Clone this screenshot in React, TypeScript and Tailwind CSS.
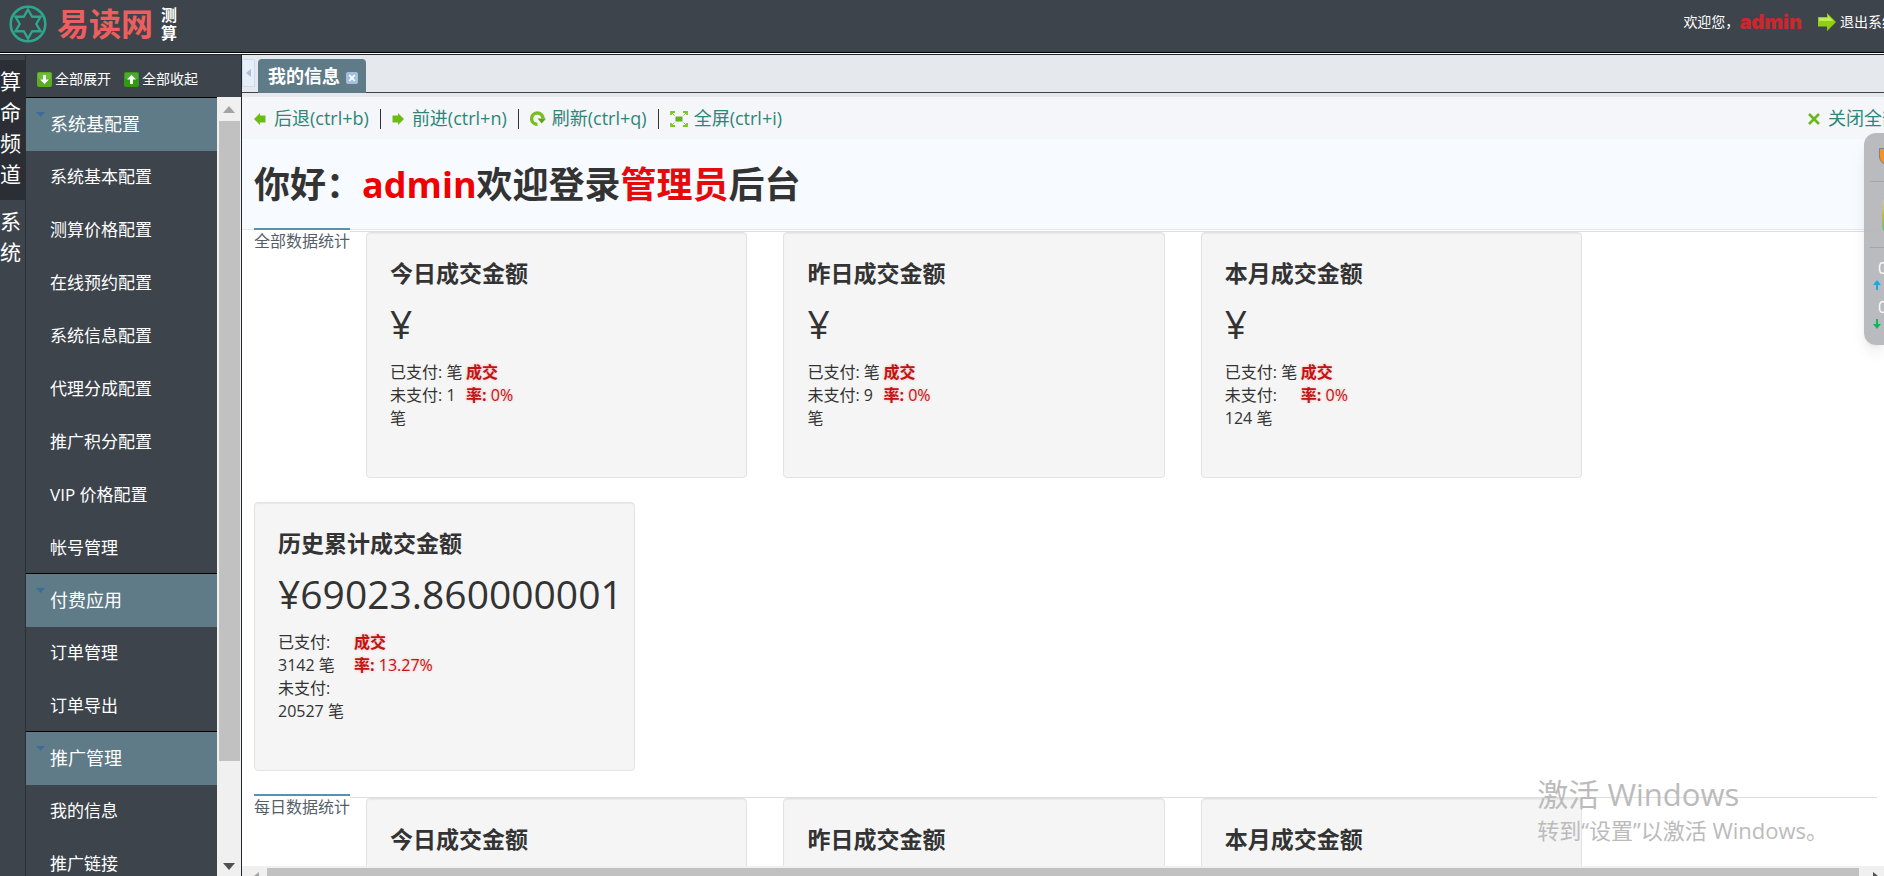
import type { ReactNode } from "react";

type MenuGroup = { title: string; items: string[] };

type Stat = {
  title: string;
  amount: string;
  paid: string;
  unpaid: string;
  rate: string;
};

const menu: MenuGroup[] = [
  {
    title: "系统基配置",
    items: [
      "系统基本配置",
      "测算价格配置",
      "在线预约配置",
      "系统信息配置",
      "代理分成配置",
      "推广积分配置",
      "VIP 价格配置",
      "帐号管理",
    ],
  },
  { title: "付费应用", items: ["订单管理", "订单导出"] },
  { title: "推广管理", items: ["我的信息", "推广链接"] },
];

const totals: Stat[] = [
  { title: "今日成交金额", amount: "", paid: "", unpaid: "1 ", rate: "0%" },
  { title: "昨日成交金额", amount: "", paid: "", unpaid: "9 ", rate: "0%" },
  { title: "本月成交金额", amount: "", paid: "", unpaid: "124 ", rate: "0%" },
  { title: "历史累计成交金额", amount: "69023.860000001", paid: "3142 ", unpaid: "20527 ", rate: "13.27%" },
];

// only the headings fit above the fold here
const daily: Stat[] = totals.slice(0, 3);

function Logo() {
  return (
    <a href="#" className="flex items-center">
      <svg className="h-[38px] w-[38px]" viewBox="0 0 38 38" fill="none" stroke="#2fa58c">
        <circle cx="19" cy="19" r="17.3" strokeWidth="2.6" />
        <path d="M19 4.5L23.2 11.8H31.5L27.3 19L31.5 26.2H23.2L19 33.5L14.8 26.2H6.5L10.7 19L6.5 11.8H14.8Z" strokeWidth="2.4" strokeLinejoin="miter" />
      </svg>
      <span className="ml-2.5 text-[32px] leading-10 font-bold text-[#ec5f5f]">易读网</span>
      <span className="ml-2 w-4 text-base leading-[18px] font-bold whitespace-normal text-white">测算</span>
    </a>
  );
}

function Header() {
  return (
    <header className="flex h-[53px] shrink-0 items-start justify-between border-b border-black bg-[#3d444c] pt-1 pl-[9px] whitespace-nowrap">
      <Logo />
      <div className="-mr-3 flex items-center pt-1.5 text-sm leading-6 text-white">
        <span>欢迎您，</span>
        <span className="font-[Inter,sans-serif] text-[20px] font-black text-[#c9292d]">admin</span>
        <a href="#" className="ml-4 flex items-center gap-1">
          <svg className="h-5 w-[18px]" viewBox="0 0 18 20">
            <path d="M0 5H9V1L18 10L9 19V14.5H0Z" fill="#8fd014" />
            <path d="M1 6H10V3.5L15.5 9H1Z" fill="#c3ea55" />
          </svg>
          退出系统
        </a>
      </div>
    </header>
  );
}

function ChannelBar() {
  return (
    <nav className="w-[26px] shrink-0 border-r border-[#2b3036] pt-[5px] text-[21px] leading-[31px] text-white">
      <a href="#" className="block bg-[#2b2f35] pt-1.5 pb-[10px]">
        <span className="block w-[21px]">算命频道</span>
      </a>
      <a href="#" className="block pt-1.5">
        <span className="block w-[21px]">系统</span>
      </a>
    </nav>
  );
}

function FoldIcon({ up }: { up?: boolean }) {
  return (
    <svg className="h-[15px] w-[15px]" viewBox="0 0 15 15">
      <rect width="15" height="15" rx="2" fill={up ? "#2f9a12" : "#57b01b"} />
      <rect x="1" y="1" width="13" height="6" rx="1" fill="#ffffff" opacity="0.15" />
      <path d={up ? "M7.5 3L12 7.5H9V12H6V7.5H3Z" : "M7.5 12L3 7.5H6V3H9V7.5H12Z"} fill="#fff" />
    </svg>
  );
}

function Sidebar() {
  return (
    <aside className="flex w-[216px] shrink-0 flex-col border-r border-[#20252b] text-white">
      <div className="flex h-[42px] shrink-0 items-center gap-[13px] pt-1.5 pl-[11px] text-sm whitespace-nowrap">
        <button className="flex items-center gap-[3px]">
          <FoldIcon />
          全部展开
        </button>
        <button className="flex items-center gap-[3px]">
          <FoldIcon up />
          全部收起
        </button>
      </div>
      <div className="flex min-h-0 flex-1">
        <nav className="min-w-0 flex-1 overflow-hidden">
          {menu.map((group) => (
            <div key={group.title}>
              <button className="flex h-[54px] w-full items-start border-t border-black bg-[#607b88] pl-[10px] text-[18px] leading-[53px]">
                <svg className="mt-[14px] h-[5px] w-[9px]" viewBox="0 0 9 5">
                  <path d="M0 0H9L4.5 5Z" fill="#3a6d97" />
                </svg>
                <span className="ml-[5px]">{group.title}</span>
              </button>
              <ul className="-mt-px -mb-px">
                {group.items.map((item) => (
                  <li key={item}>
                    <a href="#" className="block pl-6 text-[17px] leading-[53px]">
                      {item}
                    </a>
                  </li>
                ))}
              </ul>
            </div>
          ))}
        </nav>
        <div className="flex w-6 shrink-0 flex-col items-center bg-[#f0f0f0]">
          <svg className="mt-[9px] h-[7px] w-3" viewBox="0 0 12 7">
            <path d="M6 0L12 7H0Z" fill="#a3a3a3" />
          </svg>
          <div className="mt-2 w-[21px] grow-[82] bg-[#c1c1c1]" />
          <div className="grow-[13]" />
          <svg className="mb-1.5 h-[7px] w-3" viewBox="0 0 12 7">
            <path d="M0 0H12L6 7Z" fill="#505050" />
          </svg>
        </div>
      </div>
    </aside>
  );
}

function TabBar() {
  return (
    <div className="shrink-0 bg-[#e5e8ed] pb-1">
      <div className="flex h-[38px] items-start border-b border-[#3d444c] pt-1">
        <button className="flex h-7 w-[13px] items-center justify-center border border-[#c9dcf2] bg-[#e6eef8]">
          <svg className="h-2 w-[5px]" viewBox="0 0 5 8">
            <path d="M5 0V8L0 4Z" fill="#a9c0dc" />
          </svg>
        </button>
        <div className="ml-[3px] flex h-[34px] items-center rounded-t bg-[#607b88] pr-2 pl-2.5 text-white">
          <span className="text-[18px] leading-8 font-bold">我的信息</span>
          <button aria-label="关闭" className="mt-1 ml-1.5">
            <svg className="h-3 w-3" viewBox="0 0 12 12">
              <rect width="12" height="12" rx="2" fill="#a3bfe0" />
              <path d="M3.2 3L8.8 9M8.8 3L3.2 9" stroke="#fff" strokeWidth="1.8" />
            </svg>
          </button>
        </div>
      </div>
    </div>
  );
}

function ToolButton({ icon, children }: { icon: ReactNode; children: ReactNode }) {
  return (
    <button className="flex items-center gap-1.5 text-[#2f8577]">
      {icon}
      <span>{children}</span>
    </button>
  );
}

function Divider() {
  return <span className="mx-[11px] h-5 w-px bg-[#333]" />;
}

function Toolbar() {
  return (
    <div className="flex h-[42px] shrink-0 items-center justify-between bg-[#f4f6fa] pt-px pl-3 text-[18px] whitespace-nowrap">
      <div className="flex items-center">
        <ToolButton
          icon={
            <svg className="h-3 w-3.5" viewBox="0 0 14 12">
              <path d="M0 6L6 0V2.5H11.5V9.5H6V12Z" fill="#6dbb16" />
            </svg>
          }
        >
          后退(ctrl+b)
        </ToolButton>
        <Divider />
        <ToolButton
          icon={
            <svg className="h-3 w-3.5" viewBox="0 0 14 12">
              <path d="M12 6L6 0V2.5H0.5V9.5H6V12Z" fill="#6dbb16" />
            </svg>
          }
        >
          前进(ctrl+n)
        </ToolButton>
        <Divider />
        <ToolButton
          icon={
            <svg className="h-4 w-4" viewBox="0 0 16 16">
              <path d="M7.5 13.4A5.7 5.7 0 1 1 13 7.5" fill="none" stroke="#78be1e" strokeWidth="3.4" />
              <path d="M7.5 7.5H16L11.8 12.5Z" fill="#5fa514" />
            </svg>
          }
        >
          刷新(ctrl+q)
        </ToolButton>
        <Divider />
        <ToolButton
          icon={
            <svg className="h-4 w-[18px]" viewBox="0 0 18 16">
              <path d="M1 4V1H5M13 1H17V4M17 12V15H13M5 15H1V12" fill="none" stroke="#7cc52c" strokeWidth="1.8" />
              <path d="M2 2L4.5 4.5M16 2L13.5 4.5M16 14L13.5 11.5M2 14L4.5 11.5" stroke="#7cc52c" strokeWidth="1" />
              <rect x="5.5" y="5.5" width="7" height="5" fill="#64b31a" />
            </svg>
          }
        >
          全屏(ctrl+i)
        </ToolButton>
      </div>
      <div className="-mr-4">
        <ToolButton
          icon={
            <svg className="h-3 w-3.5" viewBox="0 0 14 12">
              <path d="M1 1L11 11M11 1L1 11" stroke="#6cb71b" strokeWidth="2.6" />
            </svg>
          }
        >
          关闭全部
        </ToolButton>
      </div>
    </div>
  );
}

function StatCard({ stat }: { stat: Stat }) {
  return (
    <div className="mr-9 mb-6 w-[23.5%] rounded border border-[#e3e3e3] bg-[#f5f5f5] px-[23px] pt-[22px] pb-[47px] shadow-[inset_0_1px_1px_rgba(0,0,0,0.05)]">
      <h3 className="text-[23px] leading-9 font-bold">{stat.title}</h3>
      <p className="mt-2 text-[39px] leading-[50px]">¥{stat.amount}</p>
      <div className="mt-3 flex text-base leading-[23px]">
        <p className="w-[76px]">
          已支付: {stat.paid}笔
          <br />
          未支付: {stat.unpaid}笔
        </p>
        <p className="text-[#c01414] [text-shadow:0_0_3px_#f8b4b4]">
          <b>
            成交
            <br />
            率:
          </b>{" "}
          {stat.rate}
        </p>
      </div>
    </div>
  );
}

function StatSection({ label, stats }: { label: string; stats: Stat[] }) {
  return (
    <section className="mr-[7px] mb-0.5 ml-3 flex flex-wrap items-start border-t border-[#ddd]">
      <h2 className="-mt-1 mr-4 border-t-2 border-[#5990ae] bg-white text-base leading-[23px] text-[#555e69]">{label}</h2>
      {stats.map((stat) => (
        <StatCard key={stat.title} stat={stat} />
      ))}
    </section>
  );
}

function BottomScrollbar() {
  return (
    <div className="flex h-[10px] shrink-0 items-end gap-2 overflow-hidden bg-[#f0f0f0] pt-0.5 pl-3">
      <svg className="h-1 w-[5px]" viewBox="0 0 5 4">
        <path d="M5 0V4H0Z" fill="#a3a3a3" />
      </svg>
      <div className="h-2 flex-1 bg-[#c1c1c1]" />
      <svg className="mr-1.5 ml-1.5 h-1 w-[5px]" viewBox="0 0 5 4">
        <path d="M0 0V4H5Z" fill="#505050" />
      </svg>
    </div>
  );
}

// Network speed widget docked half outside the right edge
function SpeedWidget() {
  return (
    <div className="absolute top-[133px] right-0 h-[212px] w-5 overflow-hidden rounded-l-xl bg-[#b1b4b8]/90 shadow-lg">
      <div className="flex w-10 flex-col pt-[15px] text-white">
        <svg className="ml-[15px] h-[18px] w-[18px]" viewBox="0 0 18 18">
          <path d="M0.5 0.5H17.5V9Q17 15 9 17.5Q1 15 0.5 9Z" fill="#f7931e" stroke="#7c7f91" />
        </svg>
        <div className="mt-[15px] ml-1.5 border-t border-[#a4a7ab]" />
        <div className="mt-[14px] ml-[18px] h-[38px] w-5 rounded-lg bg-linear-to-b from-[#c9cbce] via-[#c6b93d] to-[#2fc27f]" />
        <div className="mt-[13px] ml-1.5 border-t border-[#a4a7ab]" />
        <span className="mt-2.5 ml-3.5 text-base leading-5">0K/s</span>
        <svg className="mt-0.5 ml-[9px] h-[10px] w-2" viewBox="0 0 8 10">
          <path d="M4 0L8 5H5V10H3V5H0Z" fill="#23a4ea" />
        </svg>
        <span className="mt-[7px] ml-3.5 text-base leading-5">0K/s</span>
        <svg className="mt-0.5 ml-[9px] h-[10px] w-2" viewBox="0 0 8 10">
          <path d="M4 10L0 5H3V0H5V5H8Z" fill="#14b560" />
        </svg>
      </div>
    </div>
  );
}

function Watermark() {
  return (
    <div className="pointer-events-none absolute right-14 bottom-[30px] text-[#bbb]">
      <p className="text-[31px] leading-10">激活 Windows</p>
      <p className="text-[22px] leading-8">转到“设置”以激活 Windows。</p>
    </div>
  );
}

export default function App() {
  return (
    <div className="relative flex h-screen flex-col overflow-hidden bg-white font-['Open_Sans','Noto_Sans_CJK_SC',sans-serif] text-[#333]">
      <Header />
      <div className="mt-px flex min-h-0 flex-1 border-t border-[#20252b]">
        <div className="flex shrink-0 bg-[#3d444c]">
          <ChannelBar />
          <Sidebar />
        </div>
        <main className="flex min-w-0 flex-1 flex-col">
          <TabBar />
          <Toolbar />
          <div className="min-h-0 flex-1 overflow-hidden">
            <h1 className="mb-px border-b border-[#e5e8ea] bg-[#f7fbff] pt-0.5 pl-3 text-4xl leading-[88px] font-bold">
              你好：<span className="text-[#f00000]">admin</span>欢迎登录<span className="text-[#e60b0b]">管理员</span>后台
            </h1>
            <StatSection label="全部数据统计" stats={totals} />
            <StatSection label="每日数据统计" stats={daily} />
          </div>
          <BottomScrollbar />
        </main>
      </div>
      <Watermark />
      <SpeedWidget />
    </div>
  );
}
